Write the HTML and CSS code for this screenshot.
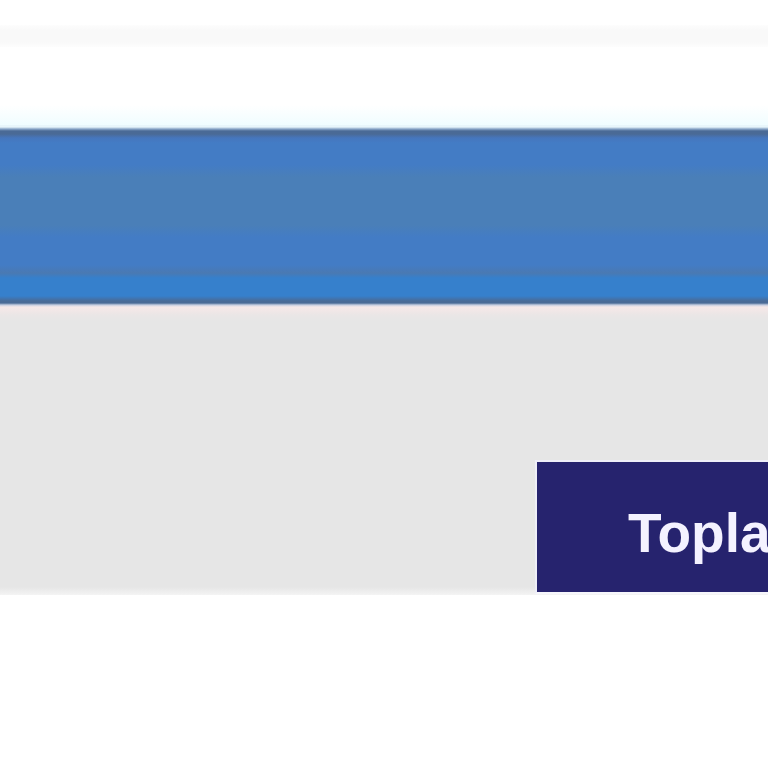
FILE: index.html
```html
<!DOCTYPE html>
<html lang="tr">
<head>
    <meta charset="UTF-8">
    <meta name="viewport" content="width=device-width, initial-scale=1.0">
    <title>Hesap</title>
    <link rel="stylesheet" href="styles.css">
</head>
<body>
    <div class="page-top">
        <div class="top-rule"></div>
    </div>
    <header class="title-bar"></header>
    <section class="panel">
        <div class="button-row">
            <button type="button" class="add-button">Topla</button>
        </div>
    </section>
</body>
</html>
```

FILE: styles.css
```css
body {
    font-family: 'Liberation Sans', Arial, sans-serif;
    background-color: #fff;
    margin: 0;
    padding: 0;
    overflow: hidden;
}
.page-top {
    height: 125px;
    padding-top: 25px;
    box-sizing: border-box;
    background: linear-gradient(to bottom, #fff 0, #fff 105px, #f0fdff 125px);
}
.top-rule {
    height: 22px;
    background: linear-gradient(to bottom, #fdfdfd 0, #f9f9f9 5px, #f9f9f9 17px, #fdfdfd 22px);
}
.title-bar {
    height: 182px;
    background: linear-gradient(to bottom,
        #e8f6fb 0, #e8f6fb 2px,
        #8aa6c8 4px, #4a6a96 6px, #4a6a96 9px,
        #4676bd 13px, #437cc5 18px, #437cc5 40px,
        #4a7fb8 52px, #4a7fb8 100px,
        #437cc5 112px, #437cc5 140px,
        #4a79b2 148px, #3680cc 153px, #3680cc 171px,
        #4a6a96 176px, #4a6a96 178px,
        #c6cde0 180px, #f7e8e8 182px);
}
.panel {
    height: 288px;
    box-sizing: border-box;
    padding-top: 153px;
    background: linear-gradient(to bottom, #f7e8e8 0, #eae6e6 8px, #e6e6e6 14px, #e6e6e6 280px, #f4f4f4 288px);
}
.button-row {
    display: flex;
    padding-left: 535px;
}
.add-button {
    flex: none;
    width: 320px;
    height: 134px;
    padding: 12px 0 0 91px;
    text-align: left;
    background-color: #26236e;
    color: #f4f2ff;
    font-family: 'Liberation Sans', Arial, sans-serif;
    font-weight: bold;
    font-size: 55px;
    border: 2px solid #eeeef8;
    border-right: none;
    border-bottom-color: #f6f6fb;
    cursor: pointer;
}
```
